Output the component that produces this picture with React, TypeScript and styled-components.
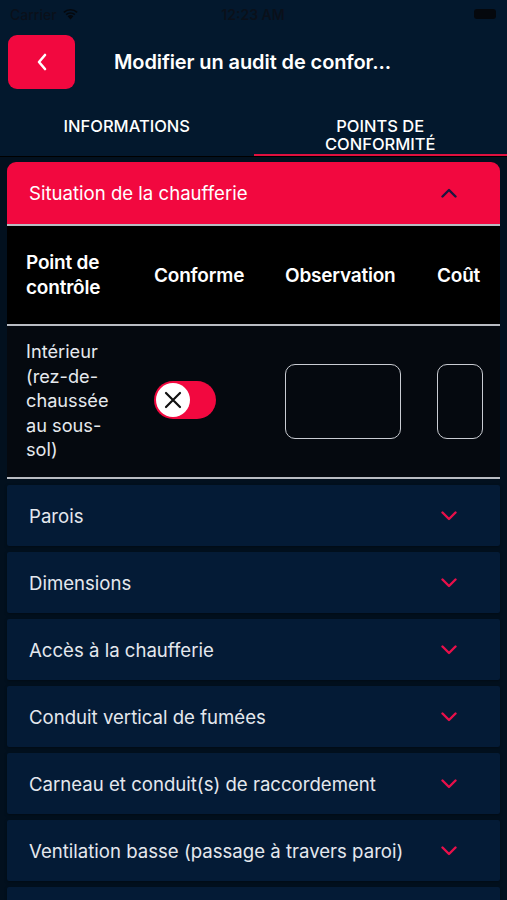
import styled, { createGlobalStyle } from "styled-components";

const GlobalStyle = createGlobalStyle`
  html, body {
    margin: 0;
    padding: 0;
    background: #03182d;
    font-family: Inter, "Liberation Sans", sans-serif;
    -webkit-font-smoothing: antialiased;
  }
  * { box-sizing: border-box; }
`;

// --------------
// Layout
// --------------
const Screen = styled.div`
  width: 507px;
  height: 900px;
  overflow: hidden;
  display: flex;
  flex-direction: column;
  background: #03182d;
  & > * {
    flex-shrink: 0;
  }
`;

const StatusBar = styled.div`
  height: 28px;
  display: flex;
  align-items: center;
  justify-content: space-between;
  padding: 0 11px 0 10px;
  color: #0a101a;
  font-size: 14px;
  font-weight: 500;
`;

const StatusLeft = styled.div`
  display: flex;
  align-items: center;
  gap: 5px;
  width: 120px;
`;

const StatusTime = styled.div`
  font-weight: 600;
`;

const Battery = styled.div`
  width: 120px;
  display: flex;
  justify-content: flex-end;
  & > span {
    display: block;
    width: 22px;
    height: 10px;
    border-radius: 3px;
    background: #05080d;
  }
`;

const Header = styled.div`
  display: flex;
  align-items: center;
  gap: 39px;
  padding: 6px 8px 0 8px;
  height: 61px;
`;

const BackButton = styled.button`
  width: 67px;
  height: 54px;
  border: none;
  border-radius: 9px;
  background: #f2083f;
  display: flex;
  align-items: center;
  justify-content: center;
  padding: 0;
`;

const Title = styled.h1`
  margin: 0;
  color: #ffffff;
  font-size: 20px;
  font-weight: 600;
  letter-spacing: -0.1px;
`;

const Tabs = styled.div`
  display: flex;
  margin-top: 21px;
  height: 46px;
`;

const Tab = styled.div<{ $active?: boolean }>`
  flex: 1;
  display: flex;
  justify-content: center;
  align-items: flex-start;
  text-align: center;
  color: #ffffff;
  font-size: 16.5px;
  font-weight: 500;
  line-height: 17.5px;
  padding-top: 8px;
  border-bottom: 2px solid ${(p) => (p.$active ? "#e0103f" : "transparent")};
`;

const Content = styled.div`
  flex: 1 1 auto;
  min-height: 0;
  overflow: hidden;
  background: #02101e;
  border-top: 1px solid #000;
  padding: 5px 7px;
  display: flex;
  flex-direction: column;
  gap: 6px;
  & > * {
    flex-shrink: 0;
  }
`;

// --------------
// Accordion
// --------------
const Section = styled.div`
  display: flex;
  flex-direction: column;
`;

const SectionHead = styled.div<{ $open?: boolean }>`
  height: ${(p) => (p.$open ? "62px" : "61px")};
  display: flex;
  align-items: center;
  justify-content: space-between;
  padding: 0 43px 0 22px;
  background: ${(p) => (p.$open ? "#f2083f" : "#041b36")};
  border-radius: ${(p) => (p.$open ? "9px 9px 0 0" : "2px")};
  color: ${(p) => (p.$open ? "#ffffff" : "#e4e8ee")};
  font-size: 18.6px;
  box-shadow: ${(p) => (p.$open ? "none" : "0 1px 3px rgba(0,0,0,0.35)")};
`;

const Divider = styled.div`
  height: 2px;
  background: #b9bcc2;
`;

const TableHead = styled.div`
  display: grid;
  grid-template-columns: 128px 131px 152px 1fr;
  align-items: center;
  height: 98px;
  background: #000000;
  padding-left: 19px;
  color: #ffffff;
  font-size: 19px;
  font-weight: 600;
  line-height: 25px;
  letter-spacing: -0.2px;
`;

const TableRow = styled.div`
  display: grid;
  grid-template-columns: 128px 131px 152px 1fr;
  align-items: center;
  height: 151px;
  background: #05090f;
  padding-left: 19px;
  color: #e6e9ee;
  font-size: 18.2px;
  line-height: 24.5px;
`;

const CellText = styled.div`
  width: 100px;
  padding-bottom: 2px;
`;

const Toggle = styled.div`
  width: 62px;
  height: 38px;
  border-radius: 19px;
  background: #f2083f;
  padding: 2px;
  display: flex;
  align-items: center;
  margin-top: -4px;
`;

const Knob = styled.div`
  width: 34px;
  height: 34px;
  border-radius: 50%;
  background: #ffffff;
  display: flex;
  align-items: center;
  justify-content: center;
`;

const InputBox = styled.div<{ $width: number }>`
  width: ${(p) => p.$width}px;
  height: 75px;
  border: 1.5px solid #c9ccd2;
  border-radius: 10px;
`;

const Chevron = ({ up, color }: { up?: boolean; color: string }) => (
  <svg width="16" height="10" viewBox="0 0 16 10">
    <path
      d={up ? "M1.5 8.5 L8 2 L14.5 8.5" : "M1.5 1.5 L8 8 L14.5 1.5"}
      fill="none"
      stroke={color}
      strokeWidth="2.4"
      strokeLinecap="round"
      strokeLinejoin="round"
    />
  </svg>
);

const sections = [
  "Parois",
  "Dimensions",
  "Accès à la chaufferie",
  "Conduit vertical de fumées",
  "Carneau et conduit(s) de raccordement",
  "Ventilation basse (passage à travers paroi)",
];

export default function App() {
  return (
    <>
      <GlobalStyle />
      <Screen>
        <StatusBar>
          <StatusLeft>
            Carrier
            <svg width="17" height="12" viewBox="0 0 17 12">
              <path
                d="M8.5 11.5 L5.6 8.2 A4.3 4.3 0 0 1 11.4 8.2 Z M3.6 6.1 A7.2 7.2 0 0 1 13.4 6.1 L12.3 7.3 A5.6 5.6 0 0 0 4.7 7.3 Z M1.3 3.8 A10.4 10.4 0 0 1 15.7 3.8 L14.6 5 A8.8 8.8 0 0 0 2.4 5 Z"
                fill="#05080d"
              />
            </svg>
          </StatusLeft>
          <StatusTime>12:23 AM</StatusTime>
          <Battery>
            <span />
          </Battery>
        </StatusBar>

        <Header>
          <BackButton>
            <svg width="12" height="20" viewBox="0 0 12 20">
              <path
                d="M9 3 L3 10 L9 17"
                fill="none"
                stroke="#ffffff"
                strokeWidth="2.6"
                strokeLinecap="round"
                strokeLinejoin="round"
              />
            </svg>
          </BackButton>
          <Title>Modifier un audit de confor...</Title>
        </Header>

        <Tabs>
          <Tab>INFORMATIONS</Tab>
          <Tab $active>
            POINTS DE
            <br />
            CONFORMITÉ
          </Tab>
        </Tabs>

        <Content>
          <Section>
            <SectionHead $open>
              Situation de la chaufferie
              <Chevron up color="#1c1640" />
            </SectionHead>
            <Divider />
            <TableHead>
              <div>
                Point de
                <br />
                contrôle
              </div>
              <div>Conforme</div>
              <div>Observation</div>
              <div>Coût</div>
            </TableHead>
            <Divider />
            <TableRow>
              <CellText>Intérieur (rez-de-chaussée au sous-sol)</CellText>
              <Toggle>
                <Knob>
                  <svg width="22" height="22" viewBox="0 0 22 22">
                    <path
                      d="M4 4 L18 18 M18 4 L4 18"
                      stroke="#111"
                      strokeWidth="2.2"
                      strokeLinecap="round"
                    />
                  </svg>
                </Knob>
              </Toggle>
              <InputBox $width={116} />
              <InputBox $width={46} />
            </TableRow>
            <Divider />
          </Section>

          {sections.map((s) => (
            <SectionHead key={s}>
              {s}
              <Chevron color="#e8104a" />
            </SectionHead>
          ))}
          {/* next item, only its top edge is on screen */}
          <SectionHead />
        </Content>
      </Screen>
    </>
  );
}
